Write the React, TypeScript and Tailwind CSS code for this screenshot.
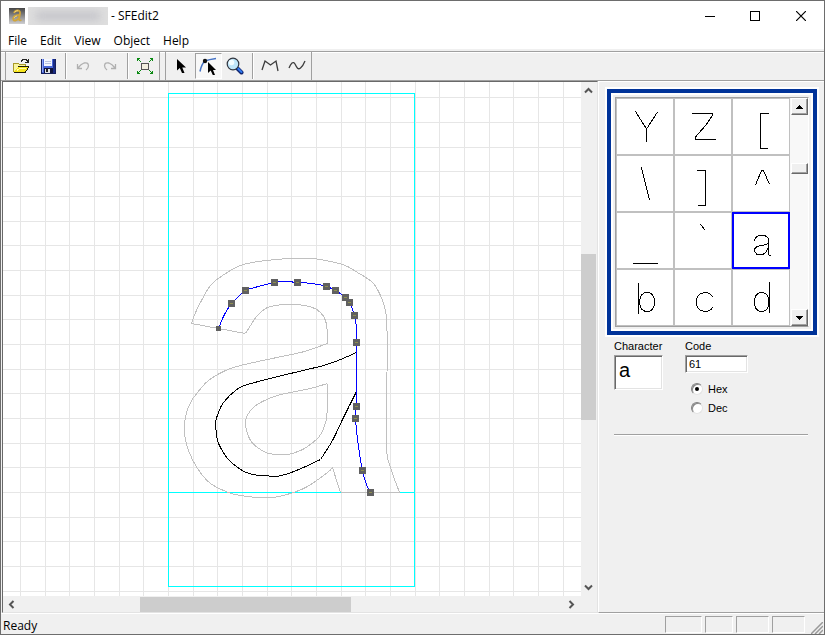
import React, { useState } from "react";

const GRID = 24.67;
const ORIGIN_X = 165;
const BASELINE = 410;

const glyphs = [
  { char: "Y", d: "M19.5 13.5L30.5 31L41.5 14M30.5 31V44" },
  { char: "Z", d: "M18 15.5H38V18L32 27L21 39.5V41.5H42" },
  { char: "[", d: "M37 15.5H28.5V50.5H36" },
  { char: "\\", d: "M25.5 12.5L33.5 45" },
  { char: "]", d: "M23 15.5H31.5V50.5H24" },
  { char: "^", d: "M23.5 30L29.5 15.5H31.5L37.5 29.5" },
  { char: "_", d: "M17 51.5H42" },
  { char: "`", d: "M26.5 12.5L28 14L31 18" },
  {
    char: "a",
    d: "M22.5 29V27.5L25 24.5L27 23.5H33L36.5 26.5V42L37.5 43.5H39M36.5 31L34 32.5L25 34.5L22.5 37V39.5L25 42.5H31L34 40L36.5 35",
  },
  { char: "b", d: "M22.5 14V45M23.5 33Q24 23.5 31 23.5Q38.5 23.5 38.5 33Q38.5 42.5 31 42.5Q24 42.5 23.5 33" },
  { char: "c", d: "M38.5 28Q36 23.5 31 23.5Q22.5 24 22.5 33Q22.5 42 31 42.5Q36 42.5 38.5 38.5" },
  { char: "d", d: "M37.500 13V44M37 33Q36.500 23.500 29.500 23.500Q22.500 23.500 22.500 33Q22.500 42.500 29.500 42.500Q36.500 42.500 37 33" },
];

// every string is one smooth run, the runs meet in corners
const outline = [
  "191,323 195,312 201,300 210,285 222,275 243,264 275,259 300,258 313,258 342,264 357,272 372,282 380,295 385,310 386,323 387,340 387,370",
  "387,370 386,380 386,447 390,467 399,492",
  "399,492 340,492",
  "340,492 337,483 332,467",
  "332,467 327,472 307,486 293,492 273,497 257,497 240,495 228,492 210,483 197,468 188,450 184,433 185,416 190,402 197,392 208,380 225,370 240,365 267,359 300,352 310,349 327,343",
  "327,343 327,333 325,320 320,312 312,307 297,304 283,304 267,307 257,315 250,325 245,333",
  "245,333 191,323",
];

const counter = [
  "327,383 310,388 300,390 277,395 260,402 250,410 245,420 246,430 250,440 257,447 268,453 287,454 300,450 307,446 318,437 323,428 326,418 327,400 327,383",
];

const bowl = [
  "356,352 340,359 323,365 290,373 247,384 235,390 223,402 218,412 215,422 216,433 218,443 227,458 240,469 252,474 265,475 275,476 288,473 303,467 320,459",
  "320,459 332,440 343,417 356,391",
];

const stem = [
  "218,328 224,314 231,303 238,296 245,290 258,286 274,282 285,281 297,282 312,283 326,286 335,290 345,297 349,302 354,315 356,328 356,342",
  "356,342 356,406",
  "356,406 355,418 358,446 362,470 366,484 370,492",
];

const nodes = [
  [231, 303],
  [245, 290],
  [274, 282],
  [297, 282],
  [326, 286],
  [335, 290],
  [345, 297],
  [349, 302],
  [354, 315],
  [356, 342],
  [356, 406],
  [355, 418],
  [362, 470],
  [370, 492],
];

const lines = Array.from({ length: 120 }, (_, i) => i - 24);

// Catmull-Rom through the points, written as cubic segments
function smooth(runs: string[]) {
  return runs
    .map((run) => {
      const p = run.split(" ").map((s) => s.split(",").map(Number));
      let d = `M${p[0][0]} ${p[0][1]}`;
      for (let i = 0; i < p.length - 1; i++) {
        const a = p[i - 1] || p[i];
        const b = p[i];
        const c = p[i + 1];
        const e = p[i + 2] || c;
        d += `C${b[0] + (c[0] - a[0]) / 6} ${b[1] + (c[1] - a[1]) / 6} ${c[0] - (e[0] - b[0]) / 6} ${
          c[1] - (e[1] - b[1]) / 6
        } ${c[0]} ${c[1]}`;
      }
      return d;
    })
    .join("");
}

function AppIcon() {
  return (
    <svg className="w-4 h-4" viewBox="0 0 16 16">
      <defs>
        <linearGradient id="appbg" x1="0" y1="0" x2="0" y2="1">
          <stop offset="0" stopColor="#454545" />
          <stop offset="1" stopColor="#cfcfd2" />
        </linearGradient>
      </defs>
      <rect width="16" height="16" fill="url(#appbg)" />
      <path
        d="M5 5Q6 2.500 8.500 2.500Q11.500 2.500 11 5.500L10 11Q10 13 12.500 12M10.500 7Q4.500 7.500 4.200 10.500Q4.200 13 6.500 12.500Q9 12 10.200 9.500"
        fill="none"
        stroke="#d0a53a"
        strokeWidth="1.800"
      />
      <path d="M5.500 4.200Q7 2.500 9 2.700M5 10Q6 8 8 8" fill="none" stroke="#f5de8c" strokeWidth="0.800" />
    </svg>
  );
}

function OpenIcon() {
  return (
    <svg className="w-[18px] h-[18px]" viewBox="0 0 18 18" shapeRendering="crispEdges">
      <path d="M1 6h5l1 1h6v4H6l-4 4H1z" fill="#f9f4a0" />
      <path d="M1.500 15V6.500H6.500L7.500 7.500H13.500V9" fill="none" stroke="#a89a2a" />
      <path d="M2 15L6 10H17L13 15Z" fill="#f7e61e" />
      <path d="M6 9.500H17M2 15.500H13L17 10" fill="none" stroke="#1c1a08" />
      <path d="M5 13.500L7.500 11.500H14" fill="none" stroke="#fffbb0" />
      <path d="M9 4.500L11 2.500H14L16 4.500M16.500 2V6M13 5.500H17" fill="none" stroke="#222" />
    </svg>
  );
}

function SaveIcon() {
  return (
    <svg className="w-4 h-4" viewBox="0 0 16 16" shapeRendering="crispEdges">
      <path d="M1 1H15V15H2L1 14Z" fill="#4a68d8" />
      <path d="M1 1H3V14H1Z" fill="#8fa6f5" />
      <path d="M13 1H15V15H13Z" fill="#1a2c86" />
      <rect x="4" y="1" width="8" height="7" fill="#f4f7ff" />
      <rect x="5" y="3" width="6" height="1" fill="#b9c4e0" />
      <rect x="5" y="5" width="6" height="1" fill="#b9c4e0" />
      <rect x="4" y="10" width="9" height="5" fill="#10143c" />
      <rect x="5" y="11" width="5" height="4" fill="#dfe3ea" />
      <rect x="6" y="11" width="2" height="3" fill="#222" />
      <path d="M1 1V14L2 15.500H15.500V1" fill="none" stroke="#16205c" />
    </svg>
  );
}

function UndoIcon() {
  return (
    <svg className="w-4 h-4" viewBox="0 0 16 16" fill="none" stroke="#b0b0b0" strokeWidth="1.300">
      <path d="M2.500 6V10.500H7M3 10Q6 6 9 5Q13 4 13.500 7.500Q13.500 10 11 12" />
    </svg>
  );
}

function RedoIcon() {
  return (
    <svg className="w-4 h-4" viewBox="0 0 16 16" fill="none" stroke="#b0b0b0" strokeWidth="1.300">
      <path d="M13.500 6V10.500H9M13 10Q10 6 7 5Q3 4 2.500 7.500Q2.500 10 5 12" />
    </svg>
  );
}

function FitIcon() {
  return (
    <svg className="w-[18px] h-[18px]" viewBox="0 0 18 18" fill="none" shapeRendering="crispEdges">
      <rect x="5.500" y="6.500" width="7" height="6" fill="#f1efdf" stroke="#555" />
      <path
        d="M1.500 4V1.500H4M14 1.500H16.500V4M16.500 14V16.500H14M4 16.500H1.500V14"
        stroke="#0a8a12"
      />
      <path
        d="M2 2h1v1h-1zM3 3h1v1h-1zM4 4h1v1h-1zM15 2h1v1h-1zM14 3h1v1h-1zM13 4h1v1h-1zM2 15h1v1h-1zM3 14h1v1h-1zM4 13h1v1h-1zM15 15h1v1h-1zM14 14h1v1h-1zM13 13h1v1h-1z"
        fill="#0a8a12"
      />
    </svg>
  );
}

function ArrowIcon() {
  return (
    <svg className="w-4 h-4" viewBox="0 0 16 16">
      <path d="M4 1V12.500L6.800 10L9 15H11.500L9.300 9.500H13Z" fill="#000" />
    </svg>
  );
}

function NodeIcon() {
  return (
    <svg className="w-5 h-5" viewBox="0 0 20 20">
      <path d="M2 15.500Q3.500 8 7 5Q11 3.500 18 2.500" fill="none" stroke="#4472c4" strokeWidth="1.500" />
      <circle cx="7" cy="5" r="2.200" fill="#111" />
      <path d="M10 6V17L12.700 14.500L14.800 19H17L15 14H18Z" fill="#000" />
    </svg>
  );
}

function ZoomIcon() {
  return (
    <svg className="w-[18px] h-[18px]" viewBox="0 0 18 18">
      <path d="M11.500 11.500L15.500 15.500" stroke="#10246e" strokeWidth="4" strokeLinecap="round" />
      <path d="M11.500 11L15.500 15" stroke="#2f78ee" strokeWidth="2" strokeLinecap="round" />
      <circle cx="7" cy="7" r="5.800" fill="#bfe6fa" stroke="#30353f" strokeWidth="1.200" />
      <circle cx="5.500" cy="5.500" r="2.800" fill="#f3fcff" />
    </svg>
  );
}

function PolylineIcon() {
  return (
    <svg className="w-[18px] h-4" viewBox="0 0 18 16" fill="none" stroke="#3c3c3c" strokeWidth="1.300">
      <path d="M1 12L4 3L9.500 7L15 3L17 13" />
    </svg>
  );
}

function CurveIcon() {
  return (
    <svg className="w-[18px] h-4" viewBox="0 0 18 16" fill="none" stroke="#3c3c3c" strokeWidth="1.300">
      <path d="M1 10C3 5 5 3 7 6C9 10 10 12 12.500 10Q15 8 17 3" />
    </svg>
  );
}

function ToolButton({ label, active, onClick, children }: any) {
  return (
    <button
      aria-label={label}
      onClick={onClick}
      className={`w-[27px] h-[26px] pr-0.5 flex items-center justify-center ${
        active ? "bg-[#f8f8f8] border border-t-[#a0a0a0] border-l-[#a0a0a0] border-b-white border-r-white" : ""
      }`}
    >
      {children}
    </button>
  );
}

function Separator() {
  return (
    <div className="w-2 flex justify-center">
      <div className="w-0.5 h-[26px] bg-[#a0a0a0] border-r border-white" />
    </div>
  );
}

function Chevron({ d }: { d: string }) {
  return (
    <svg className="w-[9px] h-[9px]" viewBox="0 0 9 9" fill="none" stroke="#555" strokeWidth="2">
      <path d={d} />
    </svg>
  );
}

const raised =
  "bg-[#f0f0f0] border border-t-white border-l-white border-b-[#696969] border-r-[#696969] shadow-[inset_-1px_-1px_0_#a0a0a0]";
const sunken =
  "bg-white border border-t-[#a0a0a0] border-l-[#a0a0a0] border-b-white border-r-white shadow-[inset_1px_1px_0_#696969,inset_-1px_-1px_0_#e3e3e3]";

function Canvas() {
  return (
    <svg className="block w-full h-full bg-white" shapeRendering="crispEdges">
      {lines.map((i) => (
        <g key={i} fill="#e6e6e6">
          <rect x={Math.round(ORIGIN_X + i * GRID)} y="0" width="1" height="100%" />
          <rect x="0" y={Math.round(BASELINE + i * GRID)} width="100%" height="1" />
        </g>
      ))}
      <g transform="translate(-2.500 -81.500)" fill="none">
        <path d="M168 93H414V586H168ZM168 492H414" stroke="#00ffff" />
        <path d={smooth(outline)} stroke="#c0c0c0" />
        <path d={smooth(counter)} stroke="#c0c0c0" />
        <path d={smooth(bowl)} stroke="#000" />
        <path d={smooth(stem)} stroke="#0000ff" />
        <rect x="215.500" y="325.500" width="5" height="5" fill="#606060" />
        {nodes.map(([x, y]) => (
          <g key={`${x}-${y}`}>
            <rect x={x - 3.5} y={y - 3.5} width="7" height="7" fill="#606060" />
            <rect x={x - 1.5} y={y - 0.5} width="3" height="1" fill="#8f8f50" />
          </g>
        ))}
      </g>
    </svg>
  );
}

function GlyphList({ selected, onSelect }: { selected: string; onSelect: (c: string) => void }) {
  return (
    <div className="w-[214px] ml-[6px] mt-[5px] border-2 border-white">
      <div className="border-4 border-[#003399]">
        <div className="border-2 border-white bg-[#f0f0f0] p-0.5">
          <div className="flex border border-[#a0a0a0] border-r-white w-[194px]">
            <div className="grid grid-cols-3 w-[174px] bg-white">
              {glyphs.map((g) => (
                <button
                  key={g.char}
                  aria-label={`Glyph ${g.char}`}
                  onClick={() => onSelect(g.char)}
                  className={`w-[58px] h-[57px] ring-inset ${
                    g.char === selected ? "ring-2 ring-[#0000ff]" : "ring-1 ring-[#c0c0c0]"
                  }`}
                >
                  <svg
                    className="block w-full h-full"
                    viewBox="0 0 58 57"
                    fill="none"
                    stroke="#000"
                    shapeRendering="crispEdges"
                  >
                    <path d={g.d} />
                  </svg>
                </button>
              ))}
            </div>
            <div className="flex-1 flex flex-col pl-px bg-[#f8f8f8]">
              <button aria-label="Previous glyphs" className={`h-[17px] flex items-center justify-center ${raised}`}>
                <svg className="w-[7px] h-1" viewBox="0 0 7 4" shapeRendering="crispEdges">
                  <path d="M3 0H4V1H5V2H6V3H7V4H0V3H1V2H2V1H3Z" />
                </svg>
              </button>
              <div className="flex-[48]" />
              <div className={`h-[11px] ${raised}`} />
              <div className="flex-[135]" />
              <button aria-label="Next glyphs" className={`h-[17px] flex items-center justify-center ${raised}`}>
                <svg className="w-[7px] h-1" viewBox="0 0 7 4" shapeRendering="crispEdges">
                  <path d="M0 0H7V1H6V2H5V3H4V4H3V3H2V2H1V1H0Z" />
                </svg>
              </button>
            </div>
          </div>
        </div>
      </div>
    </div>
  );
}

export default function App() {
  const [selected, setSelected] = useState("a");
  const [base, setBase] = useState("hex");
  const [tool, setTool] = useState("node");

  const value = selected.charCodeAt(0);
  const code = base === "hex" ? value.toString(16) : String(value);

  return (
    <div className="h-screen flex flex-col border border-[#6d6d6d] bg-[#f0f0f0] text-black text-xs font-['Open_Sans',sans-serif] overflow-hidden select-none">
      <header className="h-[29px] flex items-center bg-white pl-2 shrink-0">
        <AppIcon />
        <div className="w-20 h-[18px] ml-[3px] bg-[#dedede] overflow-hidden flex items-center justify-center">
          <div className="w-16 h-2 bg-[#c2c2c8] blur-xs" />
        </div>
        <h1 className="ml-[3px]">- SFEdit2</h1>
        <div className="ml-auto flex items-center">
          <button aria-label="Minimize" className="w-[45px] h-7 flex items-center justify-center">
            <svg className="w-2.5 h-2.5" viewBox="0 0 10 10" shapeRendering="crispEdges">
              <path d="M0 5H10V6H0Z" />
            </svg>
          </button>
          <button aria-label="Maximize" className="w-[46px] h-7 flex items-center justify-center">
            <svg className="w-2.5 h-2.5" viewBox="0 0 10 10" fill="none" stroke="#000" shapeRendering="crispEdges">
              <path d="M0.500 0.500H9.500V9.500H0.500Z" />
            </svg>
          </button>
          <button aria-label="Close" className="w-[46px] h-7 flex items-center justify-center">
            <svg className="w-2.5 h-2.5" viewBox="0 0 10 10" fill="none" stroke="#000" strokeWidth="1.200">
              <path d="M0 0L10 10M10 0L0 10" />
            </svg>
          </button>
        </div>
      </header>

      <nav className="h-[19px] flex items-center bg-white pt-0.5 pl-px shrink-0">
        {["File", "Edit", "View", "Object", "Help"].map((m) => (
          <button key={m} className="pl-[6px] pr-[7px]">
            {m}
          </button>
        ))}
      </nav>

      <div className="mt-0.5 h-[30px] flex items-center border-t border-b border-[#a0a0a0] shadow-[inset_0_1px_0_#fff] shrink-0">
        <div className="flex h-7 items-center ml-1 pl-0.5 border-l border-r border-[#a0a0a0]">
          <ToolButton label="Open">
            <OpenIcon />
          </ToolButton>
          <ToolButton label="Save">
            <SaveIcon />
          </ToolButton>
          <Separator />
          <ToolButton label="Undo">
            <UndoIcon />
          </ToolButton>
          <ToolButton label="Redo">
            <RedoIcon />
          </ToolButton>
          <Separator />
          <ToolButton label="Fit to window">
            <FitIcon />
          </ToolButton>
        </div>
        <div className="flex h-7 items-center ml-[5px] pl-0.5 border-l border-r border-[#a0a0a0]">
          <ToolButton label="Select" active={tool === "select"} onClick={() => setTool("select")}>
            <ArrowIcon />
          </ToolButton>
          <ToolButton label="Edit nodes" active={tool === "node"} onClick={() => setTool("node")}>
            <NodeIcon />
          </ToolButton>
          <ToolButton label="Zoom" active={tool === "zoom"} onClick={() => setTool("zoom")}>
            <ZoomIcon />
          </ToolButton>
          <Separator />
          <ToolButton label="Polyline" active={tool === "line"} onClick={() => setTool("line")}>
            <PolylineIcon />
          </ToolButton>
          <ToolButton label="Curve" active={tool === "curve"} onClick={() => setTool("curve")}>
            <CurveIcon />
          </ToolButton>
        </div>
      </div>

      <div className="flex-1 flex min-h-0">
        <main className="flex-1 min-w-0 flex flex-col border-l border-t border-t-[#696969] border-l-[#696969] ml-px border-b border-b-[#e3e3e3] border-r border-r-[#e3e3e3]">
          <div className="flex-1 flex min-h-0">
            <div className="flex-1 min-w-0">
              <Canvas />
            </div>
            <div className="w-4 pr-px flex flex-col">
              <button aria-label="Scroll up" className="h-[17px] flex items-center justify-center">
                <Chevron d="M1 6.500L4.500 3L8 6.500" />
              </button>
              <div className="flex-[155]" />
              <div className="flex-[167] bg-[#cdcdcd]" />
              <div className="flex-[159]" />
              <button aria-label="Scroll down" className="h-[17px] flex items-center justify-center">
                <Chevron d="M1 2.500L4.500 6L8 2.500" />
              </button>
            </div>
          </div>
          <div className="h-4 flex pr-[17px] pt-px">
            <button aria-label="Scroll left" className="w-[17px] flex items-center justify-center">
              <Chevron d="M6.500 1L3 4.500L6.500 8" />
            </button>
            <div className="flex-[120]" />
            <div className="flex-[212] bg-[#cdcdcd]" />
            <div className="flex-[212]" />
            <button aria-label="Scroll right" className="w-[17px] flex items-center justify-center">
              <Chevron d="M2.500 1L6 4.500L2.500 8" />
            </button>
          </div>
        </main>

        <aside className="w-[226px] border-l border-t border-white border-b border-b-[#a0a0a0] text-[11px] font-['Liberation_Sans',sans-serif]">
          <GlyphList selected={selected} onSelect={setSelected} />
          <div className="flex gap-[22px] ml-[15px] mt-px">
            <div className="flex flex-col w-[49px]">
              <label htmlFor="character" className="leading-4">
                Character
              </label>
              <input
                id="character"
                value={selected}
                readOnly
                className={`w-[49px] h-[35px] mt-px px-1 pb-1 text-xl outline-none ${sunken}`}
              />
            </div>
            <div className="flex flex-col">
              <label htmlFor="code" className="leading-4">
                Code
              </label>
              <input
                id="code"
                value={code}
                readOnly
                className={`w-[63px] h-[18px] mt-px px-[3px] outline-none ${sunken}`}
              />
              <div className="flex flex-col gap-[3px] mt-2 ml-[6px]">
                {["hex", "dec"].map((b) => (
                  <label key={b} className="flex items-center gap-[5px] leading-4 capitalize">
                    <input
                      type="radio"
                      name="base"
                      checked={base === b}
                      onChange={() => setBase(b)}
                      className="appearance-none w-3 h-3 rounded-full bg-white border border-t-[#808080] border-l-[#808080] border-b-[#e3e3e3] border-r-[#e3e3e3] shadow-[inset_1px_1px_0_#888] flex items-center justify-center checked:before:w-1 checked:before:h-1 checked:before:rounded-full checked:before:bg-black checked:before:content-['']"
                    />
                    {b}
                  </label>
                ))}
              </div>
            </div>
          </div>
          <hr className="ml-[15px] mr-4 mt-[18px] h-0.5 border-t border-[#a0a0a0] bg-white" />
        </aside>
      </div>

      <footer className="h-[21px] flex items-center pt-px border-t border-white pl-0.5 shrink-0">
        <span className="pt-0.5">Ready</span>
        <div className="ml-auto flex gap-[3px] h-[17px]">
          <div className="w-[37px] border border-t-[#a0a0a0] border-l-[#a0a0a0] border-b-white border-r-white" />
          <div className="w-7 border border-t-[#a0a0a0] border-l-[#a0a0a0] border-b-white border-r-white" />
          <div className="w-[33px] border border-t-[#a0a0a0] border-l-[#a0a0a0] border-b-white border-r-white" />
          <div className="w-[33px] border border-t-[#a0a0a0] border-l-[#a0a0a0] border-b-white border-r-white" />
        </div>
        <svg className="w-3 h-3 ml-[6px] mr-px self-end" viewBox="0 0 12 12" stroke="#999" strokeWidth="1.500">
          <path d="M0 12L12 0M4 12L12 4M8 12L12 8" />
        </svg>
      </footer>
    </div>
  );
}
